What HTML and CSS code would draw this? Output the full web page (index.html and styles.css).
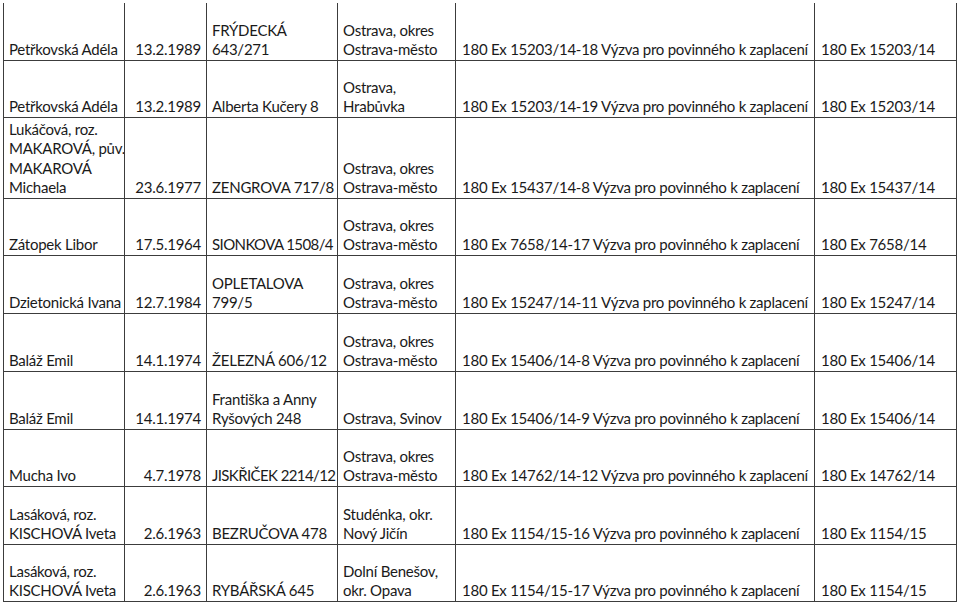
FILE: index.html
```html
<!DOCTYPE html>
<html lang="cs">
<head>
<meta charset="utf-8">
<title>Seznam výzev</title>
<link rel="stylesheet" href="styles.css">
</head>
<body>
<table class="list">
<colgroup>
<col class="c-name"><col class="c-date"><col class="c-addr"><col class="c-city"><col class="c-doc"><col class="c-ref">
</colgroup>
<tbody>
<tr class="r1"><td>Petřkovská Adéla</td><td class="date">13.2.1989</td><td>FRÝDECKÁ<br>643/271</td><td>Ostrava, okres<br>Ostrava-město</td><td>180 Ex 15203/14-18 Výzva pro povinného k zaplacení</td><td>180 Ex 15203/14</td></tr>
<tr class="r2"><td>Petřkovská Adéla</td><td class="date">13.2.1989</td><td>Alberta Kučery 8</td><td>Ostrava,<br>Hrabůvka</td><td>180 Ex 15203/14-19 Výzva pro povinného k zaplacení</td><td>180 Ex 15203/14</td></tr>
<tr class="r3"><td>Lukáčová, roz.<br>MAKAROVÁ, pův.<br>MAKAROVÁ<br>Michaela</td><td class="date">23.6.1977</td><td>ZENGROVA 717/8</td><td>Ostrava, okres<br>Ostrava-město</td><td>180 Ex 15437/14-8 Výzva pro povinného k zaplacení</td><td>180 Ex 15437/14</td></tr>
<tr class="r4"><td>Zátopek Libor</td><td class="date">17.5.1964</td><td class="tight">SIONKOVA 1508/4</td><td>Ostrava, okres<br>Ostrava-město</td><td>180 Ex 7658/14-17 Výzva pro povinného k zaplacení</td><td>180 Ex 7658/14</td></tr>
<tr class="r5"><td>Dzietonická Ivana</td><td class="date">12.7.1984</td><td>OPLETALOVA<br>799/5</td><td>Ostrava, okres<br>Ostrava-město</td><td>180 Ex 15247/14-11 Výzva pro povinného k zaplacení</td><td>180 Ex 15247/14</td></tr>
<tr class="r6"><td>Baláž Emil</td><td class="date">14.1.1974</td><td>ŽELEZNÁ 606/12</td><td>Ostrava, okres<br>Ostrava-město</td><td>180 Ex 15406/14-8 Výzva pro povinného k zaplacení</td><td>180 Ex 15406/14</td></tr>
<tr class="r7"><td>Baláž Emil</td><td class="date">14.1.1974</td><td>Františka a Anny<br>Ryšových 248</td><td>Ostrava, Svinov</td><td>180 Ex 15406/14-9 Výzva pro povinného k zaplacení</td><td>180 Ex 15406/14</td></tr>
<tr class="r8"><td>Mucha Ivo</td><td class="date">4.7.1978</td><td class="tight">JISKŘIČEK 2214/12</td><td>Ostrava, okres<br>Ostrava-město</td><td>180 Ex 14762/14-12 Výzva pro povinného k zaplacení</td><td>180 Ex 14762/14</td></tr>
<tr class="r9"><td>Lasáková, roz.<br>KISCHOVÁ Iveta</td><td class="date">2.6.1963</td><td>BEZRUČOVA 478</td><td>Studénka, okr.<br>Nový Jičín</td><td>180 Ex 1154/15-16 Výzva pro povinného k zaplacení</td><td>180 Ex 1154/15</td></tr>
<tr class="r10"><td>Lasáková, roz.<br>KISCHOVÁ Iveta</td><td class="date">2.6.1963</td><td>RYBÁŘSKÁ 645</td><td>Dolní Benešov,<br>okr. Opava</td><td>180 Ex 1154/15-17 Výzva pro povinného k zaplacení</td><td>180 Ex 1154/15</td></tr>
</tbody>
</table>
</body>
</html>
```

FILE: styles.css
```css
html, body {
  margin: 0;
  padding: 0;
  background: #ffffff;
}

body {
  padding: 3px 0 0 3px;
}

.list {
  border-collapse: collapse;
  table-layout: fixed;
  width: 953px;
  font-family: Lato, "Open Sans", sans-serif;
  font-size: 15px;
  line-height: 19.4px;
  letter-spacing: -0.25px;
  color: #1a1a1a;
}

.c-name { width: 121px; }
.c-date { width: 82px; }
.c-addr { width: 131px; }
.c-city { width: 118px; }
.c-doc  { width: 359px; }
.c-ref  { width: 142px; }

.list td {
  border: 1px solid #3c3c3c;
  padding: 0 5px 0 5px;
  vertical-align: bottom;
  white-space: nowrap;
  overflow: hidden;
}

.list tr.r1 td { border-top: none; }

.list td.date { text-align: right; }

.list td.tight { letter-spacing: -0.6px; }

.list td:nth-child(5) { padding-left: 6px; }
.list td:nth-child(6) { padding-left: 6px; }

.r1 { height: 57px; }
.r2 { height: 57px; }
.r3 { height: 81px; }
.r4 { height: 57px; }
.r5 { height: 58px; }
.r6 { height: 58px; }
.r7 { height: 58px; }
.r8 { height: 57px; }
.r9 { height: 58px; }
.r10 { height: 57px; }
```
